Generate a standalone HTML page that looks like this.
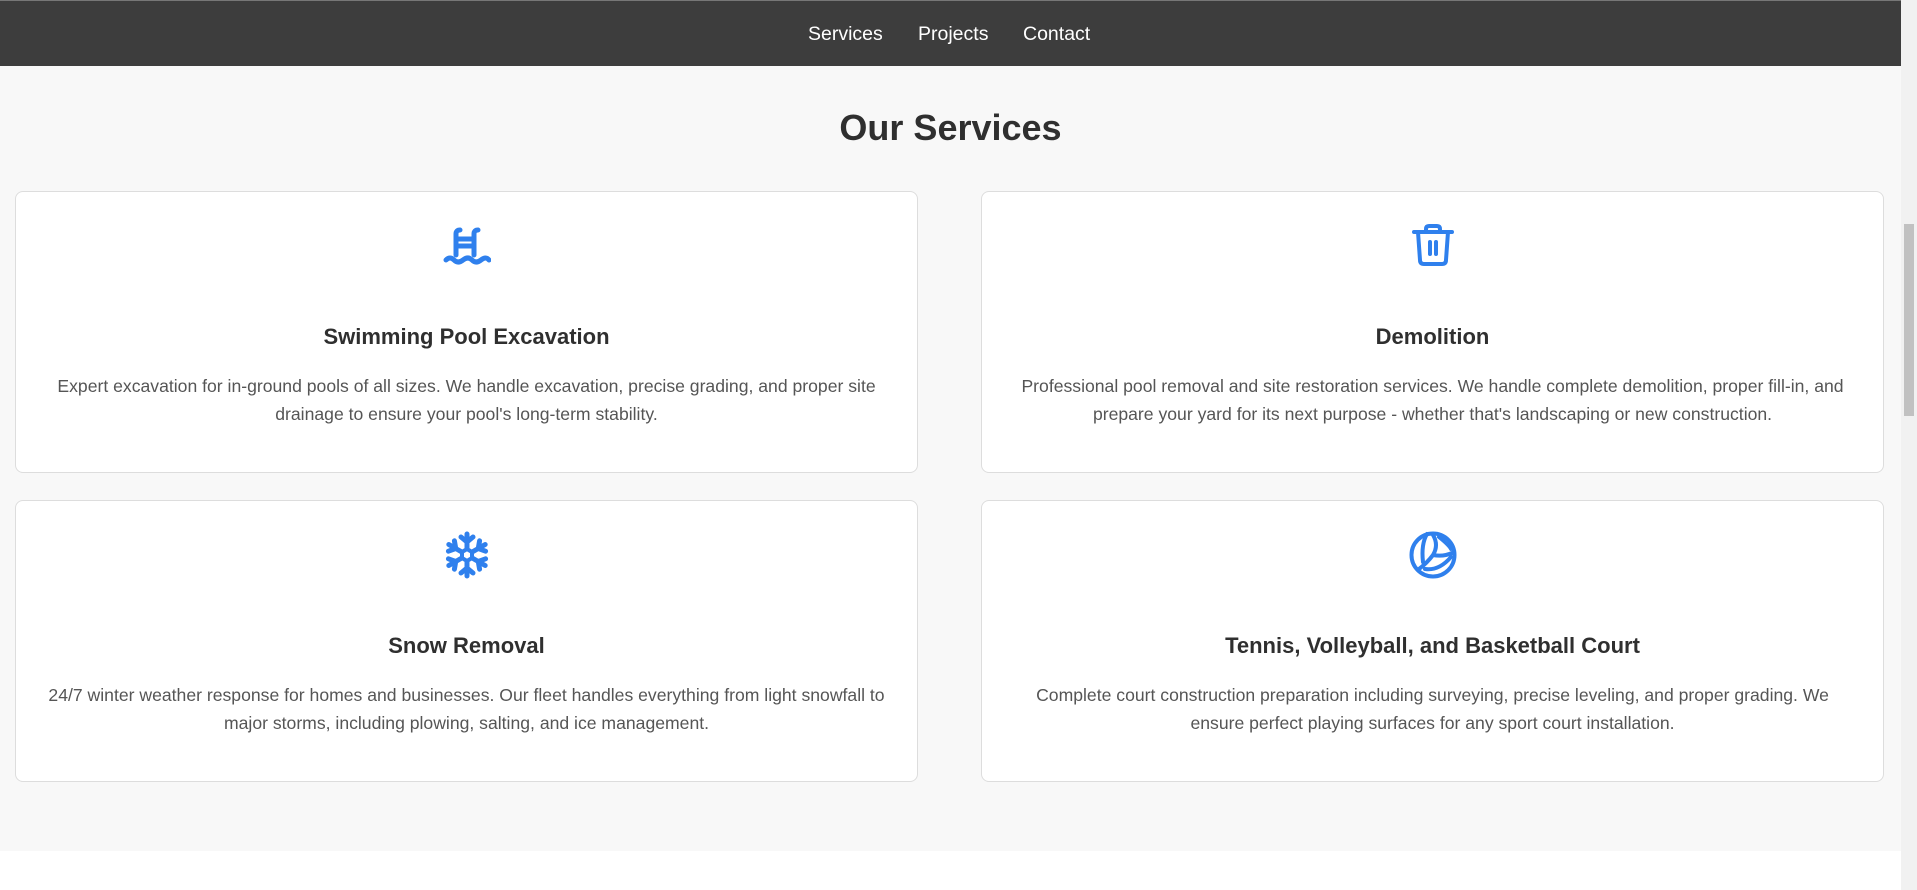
<!DOCTYPE html>
<html><head><meta charset="utf-8">
<style>
*{box-sizing:border-box;margin:0;padding:0}
html,body{width:1917px;height:890px;overflow:hidden;background:#fff;font-family:"Liberation Sans",Arial,sans-serif}
.nav{position:absolute;left:0;top:0;width:1901px;height:66px;background:#3d3d3d;border-top:1px solid #777}
.nav a{position:absolute;top:22px;color:#fff;font-size:19.5px;text-decoration:none}
.main{position:absolute;left:0;top:66px;width:1901px;height:785px;background:#f8f8f8}
h1{position:absolute;left:0;width:1901px;top:41px;text-align:center;font-size:36px;color:#2f2f2f;font-weight:bold}
.card{position:absolute;width:903px;height:282px;background:#fff;border:1px solid #ddd;border-radius:8px;text-align:center}
.card svg{position:absolute;left:50%;margin-left:-24px;top:30px}
.card h3{position:absolute;left:0;right:0;top:132px;font-size:22px;color:#2f2f2f}
.card p{position:absolute;left:30px;right:30px;top:180px;font-size:17.6px;line-height:28px;color:#555}
.sb{position:absolute;left:1901px;top:0;width:16px;height:890px;background:#f1f1f1}
.thumb{position:absolute;left:1904px;top:224px;width:10px;height:192px;background:#c1c1c1}
</style></head><body>
<div class="nav">
<a style="left:808px">Services</a>
<a style="left:918px">Projects</a>
<a style="left:1023px">Contact</a>
</div>
<div class="main">
<h1>Our Services</h1>
<div class="card" style="left:15px;top:125px">
<svg width="48" height="48" viewBox="0 0 48 48" fill="none" stroke="#2f80ed" stroke-width="5" stroke-linecap="round">
<path d="M13 33V12q0-4 4-4M31 33V12q0-4 4-4M13 17h18M13 24h18"/>
<path d="M3 38q4-4 8 0t9 0 9 0 9 0 8 0"/>
</svg>
<h3>Swimming Pool Excavation</h3>
<p>Expert excavation for in-ground pools of all sizes. We handle excavation, precise grading, and proper site drainage to ensure your pool's long-term stability.</p>
</div>
<div class="card" style="left:981px;top:125px">
<svg width="48" height="48" viewBox="0 0 48 48" fill="none" stroke="#2f80ed" stroke-width="4" stroke-linecap="round" stroke-linejoin="round">
<path d="M5 10h38M17 10V7q0-3 3-3h8q3 0 3 3v3M9 10l2 28q0 4 4 4h18q4 0 4-4l2-28M21 20v12M27 20v12"/>
</svg>
<h3>Demolition</h3>
<p>Professional pool removal and site restoration services. We handle complete demolition, proper fill-in, and prepare your yard for its next purpose - whether that's landscaping or new construction.</p>
</div>
<div class="card" style="left:15px;top:434px">
<svg width="48" height="48" viewBox="0 0 48 48" fill="none" stroke="#2f80ed" stroke-width="5" stroke-linecap="round" stroke-linejoin="round">
<g id="arm"><path d="M24 18V3M18 6l6 5 6-5"/></g>
<use href="#arm" transform="rotate(60 24 24)"/><use href="#arm" transform="rotate(120 24 24)"/>
<use href="#arm" transform="rotate(180 24 24)"/><use href="#arm" transform="rotate(240 24 24)"/>
<use href="#arm" transform="rotate(300 24 24)"/>
<path d="M24 18l5 3v6l-5 3-5-3v-6z" stroke-width="4"/>
</svg>
<h3>Snow Removal</h3>
<p>24/7 winter weather response for homes and businesses. Our fleet handles everything from light snowfall to major storms, including plowing, salting, and ice management.</p>
</div>
<div class="card" style="left:981px;top:434px">
<svg width="48" height="48" viewBox="0 0 48 48" fill="none" stroke="#2f80ed" stroke-width="4" stroke-linecap="round">
<circle cx="24" cy="24" r="21.5"/>
<path d="M18 3q-6 10-4 28M24 4q6 10 0 20M24 24q10 2 19-2M24 24q-6 8-14 14M16 38q14 2 26-12M30 6q10 8 12 12"/>
</svg>
<h3>Tennis, Volleyball, and Basketball Court</h3>
<p>Complete court construction preparation including surveying, precise leveling, and proper grading. We ensure perfect playing surfaces for any sport court installation.</p>
</div>
</div>
<div class="sb"></div><div class="thumb"></div>
</body></html>
